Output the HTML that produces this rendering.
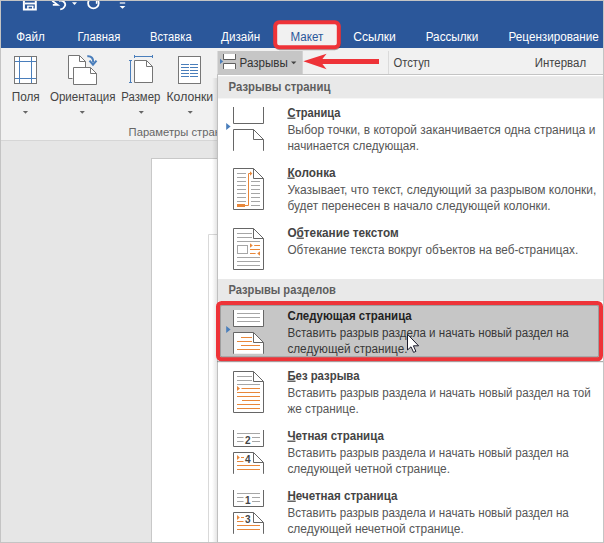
<!DOCTYPE html>
<html lang="ru"><head><meta charset="utf-8"><title>Разрывы</title>
<style>
html,body{margin:0;padding:0;background:#fff;overflow:hidden}
svg{display:block;position:absolute;left:0;top:0}
text{font-family:"Liberation Sans",sans-serif;}
</style></head><body>
<svg width="604" height="543" viewBox="0 0 604 543">
<rect x="0" y="0" width="604" height="543" fill="#e6e6e6" />
<rect x="0" y="0" width="604" height="48" fill="#2b579a" />
<rect x="0" y="48" width="604" height="92" fill="#f1f1f1" />
<rect x="0" y="140" width="604" height="1" fill="#d6d6d6" />
<rect x="151.5" y="158.5" width="500" height="400" fill="#fff" stroke="#c8c8c8" stroke-width="1"/>
<path d="M208.5 543V234.5H218" fill="none" stroke="#d9d9d9" stroke-width="1" />
<path d="M23.9 0V9.4H35.8V0" fill="none" stroke="#fff" stroke-width="2" />
<rect x="25" y="2.6" width="10" height="1.8" fill="#fff" />
<rect x="27.2" y="6" width="1.4" height="4" fill="#fff" />
<rect x="32" y="6" width="1.4" height="4" fill="#fff" />
<rect x="27.2" y="5.6" width="6.2" height="1.2" fill="#fff" />
<path d="M52.2 0.8L57.6 4.8H52.8" fill="none" stroke="#fff" stroke-width="1.7" stroke-linejoin="miter"/>
<path d="M59 0.9C63.2 0 66.2 3 64.9 6C64 8 62.2 9.2 60.2 9.4" fill="none" stroke="#fff" stroke-width="1.8" />
<path d="M72 2.2H77L74.5 5Z" fill="#fff" />
<path d="M97.2 -0.6A5.3 5.3 0 1 1 89.6 -0.6" fill="none" stroke="#fff" stroke-width="1.8" />
<path d="M96.6 0V3.8" fill="none" stroke="#fff" stroke-width="1.5" />
<rect x="119.8" y="2.4" width="5.4" height="1.2" fill="#fff" />
<path d="M119.6 6H125.4L122.5 8.8Z" fill="#fff" />
<rect x="273.8" y="23" width="67" height="27.2" rx="6" fill="#333" opacity="0.4"/>
<rect x="275.2" y="22.3" width="63.6" height="25" rx="4" ry="4" fill="#f1f1f1" stroke="#ee3338" stroke-width="4"/>
<rect x="14.5" y="56.5" width="22" height="27" fill="#fff" stroke="#777" stroke-width="1"/>
<path d="M19.5 57V83M31.5 57V83M15 61.5H36M15 78.5H36" fill="none" stroke="#4a7ebb" stroke-width="1" />
<path d="M72.5 78.5H68.5V55.5H79.5L85.5 61.5V67" fill="#fff" stroke="#757575" stroke-width="1" />
<path d="M79.5 55.5V61.5H85.5" fill="none" stroke="#757575" stroke-width="1" />
<path d="M73.5 67.5H90.5L96.5 73.5V84.5H73.5Z" fill="#fff" stroke="#757575" stroke-width="1" />
<path d="M90.5 67.5V73.5H96.5" fill="none" stroke="#757575" stroke-width="1" />
<path d="M87.3 56.3C91.5 55.8 93.6 58.5 93.2 62.5" fill="none" stroke="#4a7ebb" stroke-width="2.1" />
<path d="M89.5 60.6L93 64.6L96.5 60.6" fill="none" stroke="#4a7ebb" stroke-width="2.1" stroke-linejoin="miter"/>
<path d="M134.5 60.5H146.5L152.5 66.5V82.5H134.5Z" fill="#fff" stroke="#757575" stroke-width="1" />
<path d="M146.5 60.5V66.5H152.5" fill="none" stroke="#757575" stroke-width="1" />
<path d="M134.5 56.5H152.5M134.5 55V58M152.5 55V58" fill="none" stroke="#4a7ebb" stroke-width="1" />
<path d="M130.5 60.5V82.5M129 60.5H132M129 82.5H132" fill="none" stroke="#4a7ebb" stroke-width="1" />
<rect x="178.5" y="56.5" width="22" height="27" fill="#fff" stroke="#777" stroke-width="1"/>
<path d="M181 64.5H189M190 64.5H198M181 67.5H189M190 67.5H198M181 70.5H189M190 70.5H198M181 73.5H189M190 73.5H198M181 76.5H189M190 76.5H198" fill="none" stroke="#4a7ebb" stroke-width="1" />
<path d="M22.9 111H28.1L25.5 113.8Z" fill="#666" />
<path d="M79.7 111H84.89999999999999L82.3 113.8Z" fill="#666" />
<path d="M138.70000000000002 111H143.9L141.3 113.8Z" fill="#666" />
<path d="M187.6 111H192.79999999999998L190.2 113.8Z" fill="#666" />
<rect x="217.5" y="51" width="85.2" height="24" fill="#c6c6c6" />
<path d="M223.5 54V59.5H235.5V54" fill="#fff" stroke="#606060" stroke-width="1" />
<path d="M223.5 69V63.5H235.5V69" fill="#fff" stroke="#606060" stroke-width="1" />
<path d="M220 58.8L223.2 61.4L220 64Z" fill="#4a7ebb" />
<path d="M291 61.4H296.4L293.7 64.2Z" fill="#444" />
<path d="M303.3 61.3L326.6 53.7L322.4 59H379V64H322.4L326.6 69.3Z" fill="#ee3338" />
<rect x="388" y="51" width="1" height="90" fill="#dadada" />
<text x="128.6" y="136.0" font-size="11.5" font-weight="400" fill="#666" textLength="113.0" lengthAdjust="spacingAndGlyphs">Параметры страницы</text>
<defs><linearGradient id="sh" x1="0" x2="1"><stop offset="0" stop-color="#000" stop-opacity="0"/><stop offset="1" stop-color="#000" stop-opacity="0.10"/></linearGradient></defs>
<rect x="212" y="78" width="5" height="470" fill="url(#sh)" />
<rect x="218" y="75" width="400" height="480" fill="#fff" />
<rect x="217" y="75" width="1" height="480" fill="#c0c0c0" />
<rect x="217" y="74" width="400" height="1" fill="#c4c4c4" />
<rect x="218" y="76.2" width="400" height="22.2" fill="#e9e9e9" />
<rect x="218" y="279" width="400" height="22" fill="#e9e9e9" />
<rect x="218" y="303" width="383" height="56.3" rx="3.5" fill="#c6c6c6" stroke="#ee3338" stroke-width="4"/>
<rect x="217" y="361" width="386" height="1.2" fill="#777" opacity="0.6"/>
<rect x="220.5" y="305.5" width="378" height="51.3" rx="1.5" fill="none" stroke="#000" stroke-opacity="0.2" stroke-width="1"/>
<path d="M233.5 107V123.5H263.5V107" fill="none" stroke="#666" stroke-width="1" />
<path d="M233.5 150.8V129.5H253.5L263.5 139.5V150.8" fill="none" stroke="#666" stroke-width="1" />
<path d="M253.5 129.5V139.5H263.5" fill="none" stroke="#666" stroke-width="1" />
<path d="M226.2 123L230.6 126.5L226.2 130Z" fill="#4a7ebb" />
<path d="M233.5 168.5H253.5L263.5 178.5V209.5H233.5Z" fill="#fff" stroke="#666" stroke-width="1" />
<path d="M253.5 168.5V178.5H263.5" fill="none" stroke="#666" stroke-width="1" />
<path d="M237 173.5H246M237 177.5H246M237 181.5H246M237 185.5H246M237 189.5H246M237 193.5H246M237 197.5H246M237 201.5H246M251 181.5H260M251 185.5H260M251 189.5H260M251 193.5H260M251 197.5H260M251 201.5H260M251 205.5H260" fill="none" stroke="#a6a6a6" stroke-width="1" />
<rect x="237" y="204" width="8" height="3" fill="#e8873a" />
<path d="M245 205.5H248.5V173.5H251" fill="none" stroke="#e8873a" stroke-width="1" />
<path d="M250 171.3L252.4 173.5L250 175.7Z" fill="#e8873a" />
<path d="M233.5 228.5H253.5L263.5 238.5V269.5H233.5Z" fill="#fff" stroke="#666" stroke-width="1" />
<path d="M253.5 228.5V238.5H263.5" fill="none" stroke="#666" stroke-width="1" />
<path d="M237 233.5H252M237 237.5H252M237 241.5H260M237 257.5H260M237 261.5H260M237 265.5H260" fill="none" stroke="#a6a6a6" stroke-width="1" />
<rect x="237.5" y="245.5" width="10" height="8" fill="#fff" stroke="#a6a6a6" stroke-width="1"/>
<path d="M254.2 245.5H260M250 249.5H260M250 253.5H255.6" fill="none" stroke="#e8873a" stroke-width="1" />
<path d="M250 243.3L252.8 245.5L250 247.7Z" fill="#e8873a" />
<path d="M260 251.3L257.2 253.5L260 255.7Z" fill="#e8873a" />
<path d="M233.5 310V326.5H263.5V310" fill="#fff" stroke="#666" stroke-width="1" />
<path d="M233.5 353.8V332.5H253.5L263.5 342.5V353.8" fill="#fff" stroke="#666" stroke-width="1" />
<path d="M253.5 332.5V342.5H263.5" fill="none" stroke="#666" stroke-width="1" />
<path d="M237 313.5H260M237 317.5H260M237 321.5H260" fill="none" stroke="#a6a6a6" stroke-width="1" />
<path d="M241 337.5H252M237 341.5H252M241 345.5H260M237 349.5H260" fill="none" stroke="#e8873a" stroke-width="1" />
<path d="M226.2 326L230.6 329.5L226.2 333Z" fill="#4a7ebb" />
<path d="M233.5 371.5H253.5L263.5 381.5V412.5H233.5Z" fill="#fff" stroke="#666" stroke-width="1" />
<path d="M253.5 371.5V381.5H263.5" fill="none" stroke="#666" stroke-width="1" />
<path d="M237 376.5H252M237 380.5H252M237 384.5H260" fill="none" stroke="#a6a6a6" stroke-width="1" />
<path d="M241.5 388.5H260M237 392.5H260M237 396.5H260M242 400.5H260M237 404.5H260M237 408.5H260" fill="none" stroke="#e8873a" stroke-width="1" />
<path d="M237 385.9L240 388.5L237 391.1Z" fill="#e8873a" />
<path d="M233.5 430V446.5H263.5V430" fill="none" stroke="#666" stroke-width="1" />
<path d="M233.5 473.8V452.5H253.5L263.5 462.5V473.8" fill="none" stroke="#666" stroke-width="1" />
<path d="M253.5 452.5V462.5H263.5" fill="none" stroke="#666" stroke-width="1" />
<path d="M237 433.5H260M237 437.5H243.5M252 437.5H260M237 441.5H243.5M252 441.5H260" fill="none" stroke="#a6a6a6" stroke-width="1" />
<path d="M237 455.1L239.8 457.5L237 459.9Z" fill="#e8873a" />
<path d="M241 457.5H244M237 461.5H243.5M237 465.5H260M237 469.5H260" fill="none" stroke="#e8873a" stroke-width="1" />
<path d="M233.5 490V506.5H263.5V490" fill="none" stroke="#666" stroke-width="1" />
<path d="M233.5 533.8V512.5H253.5L263.5 522.5V533.8" fill="none" stroke="#666" stroke-width="1" />
<path d="M253.5 512.5V522.5H263.5" fill="none" stroke="#666" stroke-width="1" />
<path d="M237 493.5H260M237 497.5H243.5M252 497.5H260M237 501.5H243.5M252 501.5H260" fill="none" stroke="#a6a6a6" stroke-width="1" />
<path d="M237 515.1L239.8 517.5L237 519.9Z" fill="#e8873a" />
<path d="M241 517.5H244M237 521.5H243.5M237 525.5H260M237 529.5H260" fill="none" stroke="#e8873a" stroke-width="1" />
<text x="16.2" y="40.5" font-size="12.5" font-weight="400" fill="#fff" textLength="28.5" lengthAdjust="spacingAndGlyphs">Файл</text>
<text x="77.4" y="40.5" font-size="12.5" font-weight="400" fill="#fff" textLength="42.9" lengthAdjust="spacingAndGlyphs">Главная</text>
<text x="150.1" y="40.5" font-size="12.5" font-weight="400" fill="#fff" textLength="41.5" lengthAdjust="spacingAndGlyphs">Вставка</text>
<text x="221.1" y="40.5" font-size="12.5" font-weight="400" fill="#fff" textLength="39.2" lengthAdjust="spacingAndGlyphs">Дизайн</text>
<text x="290.6" y="40.5" font-size="12.5" font-weight="400" fill="#2b579a" textLength="32.8" lengthAdjust="spacingAndGlyphs">Макет</text>
<text x="353.2" y="40.5" font-size="12.5" font-weight="400" fill="#fff" textLength="42.7" lengthAdjust="spacingAndGlyphs">Ссылки</text>
<text x="425.7" y="40.5" font-size="12.5" font-weight="400" fill="#fff" textLength="52.6" lengthAdjust="spacingAndGlyphs">Рассылки</text>
<text x="508.6" y="40.5" font-size="12.5" font-weight="400" fill="#fff" textLength="90.2" lengthAdjust="spacingAndGlyphs">Рецензирование</text>
<text x="11.7" y="101.4" font-size="12.3" font-weight="400" fill="#444" textLength="28.0" lengthAdjust="spacingAndGlyphs">Поля</text>
<text x="49.9" y="101.4" font-size="12.3" font-weight="400" fill="#444" textLength="65.6" lengthAdjust="spacingAndGlyphs">Ориентация</text>
<text x="121.3" y="101.4" font-size="12.3" font-weight="400" fill="#444" textLength="39.0" lengthAdjust="spacingAndGlyphs">Размер</text>
<text x="166.5" y="101.4" font-size="12.3" font-weight="400" fill="#444" textLength="46.6" lengthAdjust="spacingAndGlyphs">Колонки</text>
<text x="239.6" y="67.2" font-size="12.3" font-weight="400" fill="#333" textLength="48.2" lengthAdjust="spacingAndGlyphs">Разрывы</text>
<text x="393.4" y="67.0" font-size="12.3" font-weight="400" fill="#444" textLength="36.5" lengthAdjust="spacingAndGlyphs">Отступ</text>
<text x="534.7" y="67.0" font-size="12.3" font-weight="400" fill="#444" textLength="51.4" lengthAdjust="spacingAndGlyphs">Интервал</text>
<text x="228.6" y="90.6" font-size="12.3" font-weight="700" fill="#5e5e5e" textLength="101.8" lengthAdjust="spacingAndGlyphs">Разрывы страниц</text>
<text x="228.5" y="293.5" font-size="12.3" font-weight="700" fill="#5e5e5e" textLength="107.3" lengthAdjust="spacingAndGlyphs">Разрывы разделов</text>
<text x="244.9" y="443.7" font-size="10" font-weight="700" fill="#444">2</text>
<text x="244.9" y="462.6" font-size="10" font-weight="700" fill="#444">4</text>
<text x="244.9" y="503.7" font-size="10" font-weight="700" fill="#444">1</text>
<text x="244.9" y="522.6" font-size="10" font-weight="700" fill="#444">3</text>
<text x="287.4" y="116.6" font-size="12.3" font-weight="700" fill="#444" textLength="53.0" lengthAdjust="spacingAndGlyphs"><tspan text-decoration="underline">С</tspan>траница</text>
<text x="287.4" y="133.9" font-size="12.3" font-weight="400" fill="#565656" textLength="308.0" lengthAdjust="spacingAndGlyphs">Выбор точки, в которой заканчивается одна страница и</text>
<text x="287.4" y="149.5" font-size="12.3" font-weight="400" fill="#565656" textLength="131.6" lengthAdjust="spacingAndGlyphs">начинается следующая.</text>
<text x="287.4" y="176.6" font-size="12.3" font-weight="700" fill="#444" textLength="48.2" lengthAdjust="spacingAndGlyphs"><tspan text-decoration="underline">К</tspan>олонка</text>
<text x="287.4" y="193.9" font-size="12.3" font-weight="400" fill="#565656" textLength="309.0" lengthAdjust="spacingAndGlyphs">Указывает, что текст, следующий за разрывом колонки,</text>
<text x="287.4" y="209.5" font-size="12.3" font-weight="400" fill="#565656" textLength="263.3" lengthAdjust="spacingAndGlyphs">будет перенесен в начало следующей колонки.</text>
<text x="287.4" y="236.6" font-size="12.3" font-weight="700" fill="#444" textLength="111.3" lengthAdjust="spacingAndGlyphs">О<tspan text-decoration="underline">б</tspan>текание текстом</text>
<text x="287.4" y="253.9" font-size="12.3" font-weight="400" fill="#565656" textLength="290.8" lengthAdjust="spacingAndGlyphs">Обтекание текста вокруг объектов на веб-страницах.</text>
<text x="287.4" y="319.6" font-size="12.3" font-weight="700" fill="#222" textLength="124.3" lengthAdjust="spacingAndGlyphs">Следующая страница</text>
<text x="287.4" y="336.9" font-size="12.3" font-weight="400" fill="#383838" textLength="281.4" lengthAdjust="spacingAndGlyphs">Вставить разрыв раздела и начать новый раздел на</text>
<text x="287.4" y="352.5" font-size="12.3" font-weight="400" fill="#383838" textLength="120.1" lengthAdjust="spacingAndGlyphs">следующей странице.</text>
<text x="287.4" y="379.6" font-size="12.3" font-weight="700" fill="#444" textLength="72.1" lengthAdjust="spacingAndGlyphs"><tspan text-decoration="underline">Б</tspan>ез разрыва</text>
<text x="287.4" y="396.9" font-size="12.3" font-weight="400" fill="#565656" textLength="303.4" lengthAdjust="spacingAndGlyphs">Вставить разрыв раздела и начать новый раздел на той</text>
<text x="287.4" y="412.5" font-size="12.3" font-weight="400" fill="#565656" textLength="71.3" lengthAdjust="spacingAndGlyphs">же странице.</text>
<text x="287.4" y="439.6" font-size="12.3" font-weight="700" fill="#444" textLength="96.4" lengthAdjust="spacingAndGlyphs"><tspan text-decoration="underline">Ч</tspan>етная страница</text>
<text x="287.4" y="456.9" font-size="12.3" font-weight="400" fill="#565656" textLength="281.4" lengthAdjust="spacingAndGlyphs">Вставить разрыв раздела и начать новый раздел на</text>
<text x="287.4" y="472.5" font-size="12.3" font-weight="400" fill="#565656" textLength="162.6" lengthAdjust="spacingAndGlyphs">следующей четной странице.</text>
<text x="287.4" y="499.6" font-size="12.3" font-weight="700" fill="#444" textLength="110.0" lengthAdjust="spacingAndGlyphs"><tspan text-decoration="underline">Н</tspan>ечетная страница</text>
<text x="287.4" y="516.9" font-size="12.3" font-weight="400" fill="#565656" textLength="281.4" lengthAdjust="spacingAndGlyphs">Вставить разрыв раздела и начать новый раздел на</text>
<text x="287.4" y="532.5" font-size="12.3" font-weight="400" fill="#565656" textLength="176.4" lengthAdjust="spacingAndGlyphs">следующей нечетной странице.</text>
<path d="M407.5 334.3V350.0L411.0 346.8L413.6 352.4L415.9 351.4L413.4 345.8H418.6Z" fill="#fff" stroke="#1c1c2c" stroke-width="1" stroke-linejoin="miter"/>
<rect x="0.5" y="0.5" width="603" height="542" fill="none" stroke="#c4c4c4" stroke-width="1"/>
</svg>
</body></html>
